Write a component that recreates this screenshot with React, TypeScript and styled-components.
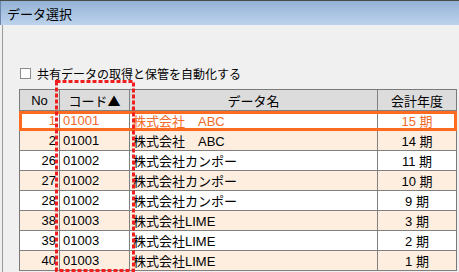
import React from "react";
import styled, { createGlobalStyle } from "styled-components";

const Global = createGlobalStyle`
  html, body { margin: 0; padding: 0; background: #f0f0f0; }
  body { font-family: "Liberation Sans", "Noto Sans CJK JP", sans-serif; }
`;

const Window = styled.div`
  width: 459px;
  height: 272px;
  overflow: hidden;
  border-top: 1px solid #4a4a4a;
  box-sizing: border-box;
  display: flex;
  flex-direction: column;
  background: #f0f0f0;
`;

const TitleBar = styled.div`
  height: 24px;
  flex: none;
  display: flex;
  align-items: center;
  padding-left: 6px;
  font-size: 13px;
  color: #000;
  background: linear-gradient(#94b2d6, #bdd3ed);
  border-left: 1px solid #6b86a8;
`;

const Body = styled.div`
  flex: 1;
  margin-left: 2px;
  border-left: 1px solid #9a9a9a;
  padding: 42px 0 0 16px;
`;

const CheckRow = styled.label`
  display: flex;
  align-items: center;
  gap: 6px;
  height: 13px;
  font-size: 12px;
  color: #000;
  margin-left: 1px;
`;

const Box = styled.span`
  width: 11px;
  height: 11px;
  background: #fff;
  border: 1px solid #8c8c8c;
  box-sizing: border-box;
`;

const TableWrap = styled.div`
  position: relative;
  margin-top: 9px;
  width: 438px;
  border: 1px solid #7a7a7a;
  border-bottom: none;
  box-sizing: border-box;
`;

const Row = styled.div<{ $bg: string; $head?: boolean; $sel?: boolean }>`
  position: relative;
  display: grid;
  grid-template-columns: 40px 70px 248px 1fr;
  height: ${(p) => (p.$head ? "21px" : "20px")};
  background: ${(p) => p.$bg};
  font-size: 13px;
  color: ${(p) => (p.$sel ? "#f26a2a" : "#000")};
  &::after {
    content: "";
    display: ${(p) => (p.$sel ? "block" : "none")};
    position: absolute;
    inset: 0 -1px 0 -1px;
    border: 3px solid #ff6a21;
    pointer-events: none;
  }
`;

const Cell = styled.div<{ $align: "left" | "right" | "center" }>`
  display: flex;
  align-items: center;
  justify-content: ${(p) =>
    p.$align === "left" ? "flex-start" : p.$align === "right" ? "flex-end" : "center"};
  padding: 0 3px;
  border-right: 1px solid #808080;
  border-bottom: 1px solid #808080;
  white-space: nowrap;
  overflow: hidden;
  &:last-child { border-right: none; }
`;

const Arrow = styled.span`
  font-family: "Noto Sans CJK JP", sans-serif;
  font-size: 13px;
`;

const Mark = styled.svg`
  position: absolute;
  left: 35px;
  top: -10px;
  pointer-events: none;
`;

const rows = [
  { no: "1", code: "01001", name: "株式会社　ABC", year: "15 期", sel: true },
  { no: "2", code: "01001", name: "株式会社　ABC", year: "14 期" },
  { no: "26", code: "01002", name: "株式会社カンポー", year: "11 期" },
  { no: "27", code: "01002", name: "株式会社カンポー", year: "10 期" },
  { no: "28", code: "01002", name: "株式会社カンポー", year: "9 期" },
  { no: "38", code: "01003", name: "株式会社LIME", year: "3 期" },
  { no: "39", code: "01003", name: "株式会社LIME", year: "2 期" },
  { no: "40", code: "01003", name: "株式会社LIME", year: "1 期" },
];

export default function App() {
  return (
    <>
      <Global />
      <Window>
        <TitleBar>データ選択</TitleBar>
        <Body>
          <CheckRow>
            <Box />
            共有データの取得と保管を自動化する
          </CheckRow>
          <TableWrap>
            <Row $bg="#dcdcdc" $head>
              <Cell $align="center">No</Cell>
              <Cell $align="center">
                コード<Arrow>▲</Arrow>
              </Cell>
              <Cell $align="center">データ名</Cell>
              <Cell $align="center">会計年度</Cell>
            </Row>
            {rows.map((r, i) => (
              <Row key={i} $bg={r.sel ? "#ffffff" : i % 2 === 1 ? "#fdeee0" : "#ffffff"} $sel={r.sel}>
                <Cell $align="right">{r.no}</Cell>
                <Cell $align="left">{r.code}</Cell>
                <Cell $align="left">{r.name}</Cell>
                <Cell $align="center">{r.year}</Cell>
              </Row>
            ))}
            <Mark width="82" height="193" viewBox="0 0 82 193">
              <rect x="1.5" y="1.5" width="77" height="189" fill="none" stroke="#f01e1e" strokeWidth="3" strokeDasharray="4 2" />
            </Mark>
          </TableWrap>
        </Body>
      </Window>
    </>
  );
}
